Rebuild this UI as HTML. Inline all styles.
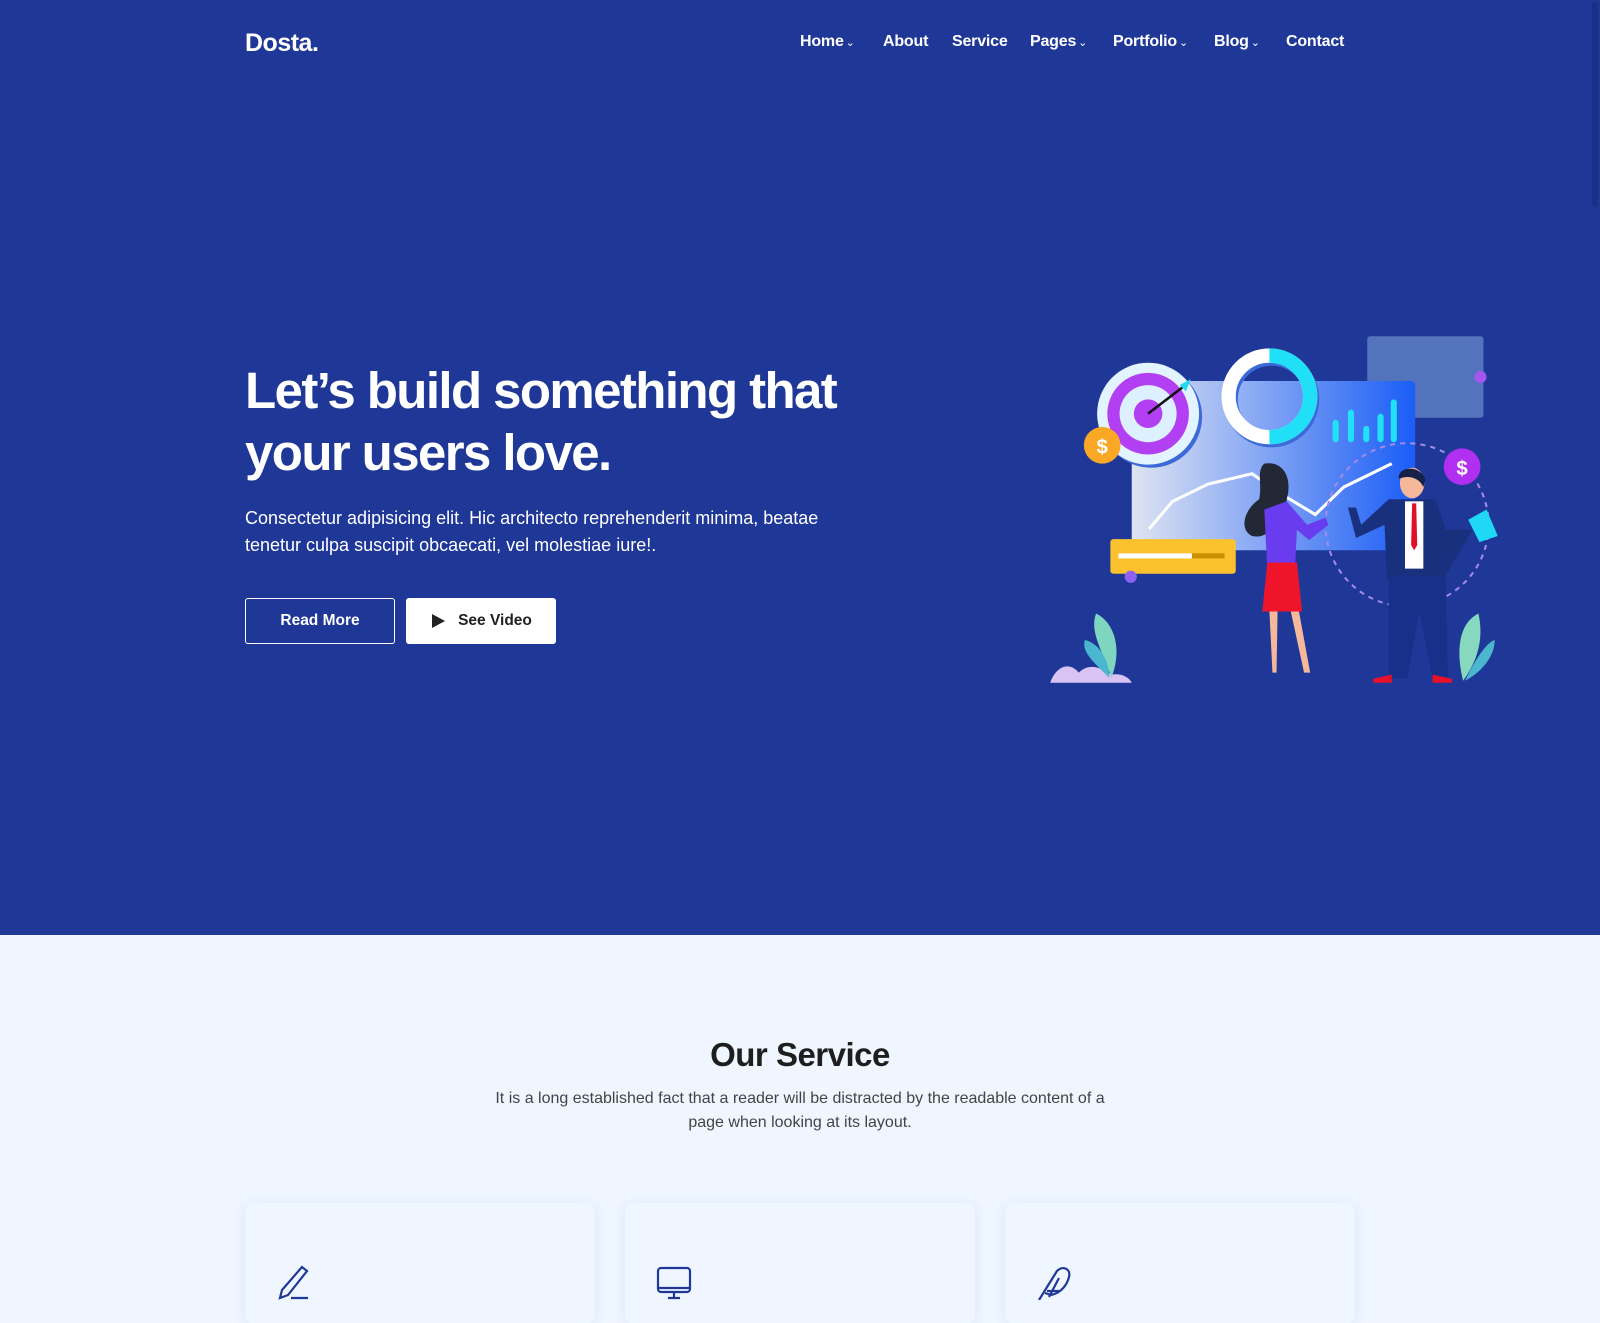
<!DOCTYPE html>
<html><head><meta charset="utf-8"><style>
*{margin:0;padding:0;box-sizing:border-box}
body{width:1600px;height:1300px;overflow:hidden;background:#eff6ff;font-family:"Liberation Sans",sans-serif;position:relative}
.hero{position:absolute;left:0;top:0;width:1600px;height:935px;background:#1f3797}
.logo{position:absolute;left:245px;top:29px;color:#fff;font-size:25px;font-weight:bold;letter-spacing:-0.5px}
.nav{position:absolute;top:33px;color:#fff;font-size:16px;font-weight:bold;letter-spacing:-0.2px}
.nav span.c{font-size:11px;font-weight:normal;margin-left:2px}
h1{position:absolute;left:245px;top:360px;color:#fff;font-size:51px;line-height:62px;font-weight:bold;letter-spacing:-1.6px}
.p{position:absolute;left:245px;top:505px;color:#fff;font-size:18px;line-height:27px;letter-spacing:0}
.btn{position:absolute;top:598px;width:150px;height:46px;border-radius:3px;font-size:15.5px;font-weight:bold;display:flex;align-items:center;justify-content:center}
.b1{left:245px;border:1px solid #fff;color:#fff}
.b2{left:406px;background:#fff;color:#222}
.sb{position:absolute;left:1592px;top:2px;width:6px;height:205px;border-radius:3px;background:#1b3084}
.t{position:absolute;left:0;width:1600px;text-align:center}
.card{position:absolute;top:1203px;width:350px;height:120px;border-radius:8px;background:#eff6ff;box-shadow:0 2px 12px rgba(30,55,150,.09)}
</style></head><body>
<div class="hero"></div>
<div class="sb"></div>
<div class="logo">Dosta.</div>
<div class="nav" style="left:800px">Home<span class="c">&#8964;</span></div>
<div class="nav" style="left:883px">About</div>
<div class="nav" style="left:952px">Service</div>
<div class="nav" style="left:1030px">Pages<span class="c">&#8964;</span></div>
<div class="nav" style="left:1113px">Portfolio<span class="c">&#8964;</span></div>
<div class="nav" style="left:1214px">Blog<span class="c">&#8964;</span></div>
<div class="nav" style="left:1286px">Contact</div>
<h1>Let’s build something that<br>your users love.</h1>
<div class="p">Consectetur adipisicing elit. Hic architecto reprehenderit minima, beatae<br>tenetur culpa suscipit obcaecati, vel molestiae iure!.</div>
<div class="btn b1">Read More</div>
<div class="btn b2"><svg width="16" height="16" viewBox="0 0 16 16" style="margin-right:12px"><path d="M2 1L15 8L2 15Z" fill="#222"/></svg>See Video</div>

<svg style="position:absolute;left:1040px;top:326px" width="469" height="367" viewBox="1020 320 460 360">
<defs><linearGradient id="g" x1="0" x2="1"><stop offset="0" stop-color="#dfe4f2"/><stop offset="1" stop-color="#1a5df6"/></linearGradient></defs>
<rect x="1341" y="330" width="114" height="80" rx="3" fill="#6688c8" opacity=".75"/>
<circle cx="1452" cy="370" r="6" fill="#a356f0"/>
<rect x="1110" y="374" width="278" height="166" rx="4" fill="url(#g)"/>
<polyline points="1127,519 1150,492 1185,475 1228,465 1262,488 1290,505 1318,478 1365,455" fill="none" stroke="#fff" stroke-width="3"/>
<g fill="#22e0f5"><rect x="1307" y="412" width="6" height="22" rx="3"/><rect x="1322" y="402" width="6" height="32" rx="3"/><rect x="1337" y="418" width="6" height="16" rx="3"/><rect x="1351" y="406" width="6" height="28" rx="3"/><rect x="1364" y="392" width="6" height="42" rx="3"/></g>
<circle cx="1129" cy="409" r="50" fill="#3c6ad8"/>
<circle cx="1126" cy="406" r="50" fill="#e2f4ff"/>
<circle cx="1126" cy="406" r="40" fill="#b23ff2"/>
<circle cx="1126" cy="406" r="28" fill="#ddf0ff"/>
<circle cx="1126" cy="406" r="14" fill="#b23ff2"/>
<line x1="1126" y1="406" x2="1160" y2="380" stroke="#111" stroke-width="2.5"/>
<path d="M1157 378L1168 372L1163 384Z" fill="#22d8f5"/>
<circle cx="1081" cy="437" r="18" fill="#f9a825"/><text x="1081" y="445" fill="#fff" font-size="20" font-weight="bold" text-anchor="middle" font-family="Liberation Sans">$</text>
<circle cx="1247" cy="392" r="40" fill="none" stroke="#3c6ad8" stroke-width="14"/>
<circle cx="1245" cy="389" r="40" fill="none" stroke="#fff" stroke-width="14"/>
<path d="M1245 349A40 40 0 0 1 1245 429" fill="none" stroke="#20e0f8" stroke-width="14"/>
<circle cx="1380" cy="515" r="80" fill="none" stroke="#a58ae8" stroke-width="2" stroke-dasharray="5 5"/>
<circle cx="1434" cy="458" r="18" fill="#b02ff0"/><text x="1434" y="466" fill="#fff" font-size="20" font-weight="bold" text-anchor="middle" font-family="Liberation Sans">$</text>
<rect x="1089" y="529" width="123" height="34" rx="3" fill="#fbc22d"/>
<rect x="1097" y="543" width="104" height="5" fill="#c99000"/><rect x="1097" y="543" width="72" height="5" fill="#fff"/>
<circle cx="1109" cy="566" r="6" fill="#8c62f0"/>
<path d="M1240 455C1258 452 1268 468 1262 490C1258 510 1245 530 1228 526C1215 520 1220 500 1235 490C1238 475 1232 462 1240 455Z" fill="#222836"/>
<path d="M1240 500L1262 492L1282 515L1300 508L1303 515L1284 530L1272 520L1270 560L1243 560Z" fill="#6a3cf0"/>
<path d="M1243 552L1272 552L1277 600L1238 600Z" fill="#f0142a"/>
<path d="M1245 600L1253 600L1252 660L1248 660Z M1266 600L1274 600L1285 660L1279 660Z" fill="#f5b89a"/>
<ellipse cx="1385" cy="474" rx="12" ry="15" fill="#f5b89a"/>
<path d="M1372 470C1370 458 1392 455 1398 470L1396 478C1392 468 1380 466 1372 470Z" fill="#17214a"/>
<path d="M1362 490L1408 490L1418 520L1444 520L1416 568L1360 568L1358 515L1330 528L1322 498L1330 498L1335 515Z" fill="#18307e"/>
<rect x="1378" y="492" width="18" height="66" fill="#fff"/><path d="M1385 494L1389 494L1390 535L1387 540L1384 535Z" fill="#e0102a"/>
<path d="M1362 566L1418 566L1420 666L1405 666L1392 600L1380 666L1362 666Z" fill="#17308a"/>
<path d="M1347 666L1365 662L1365 670L1347 670Z M1405 662L1424 666L1424 670L1405 670Z" fill="#e8102a"/>
<path d="M1440 510L1458 500L1469 526L1451 532Z" fill="#1fd8f5"/>
<path d="M1030 670C1035 655 1048 648 1058 660C1068 650 1080 655 1090 662C1100 660 1108 665 1110 670Z" fill="#d9c3f5"/>
<path d="M1090 665C1082 640 1068 620 1075 602C1095 612 1100 640 1090 665Z" fill="#7ed6c0"/>
<path d="M1088 665C1075 652 1060 640 1064 628C1080 632 1088 650 1088 665Z" fill="#4bb7cf"/>
<path d="M1435 668C1428 640 1430 612 1450 602C1456 628 1448 650 1435 668Z" fill="#86d9bf"/>
<path d="M1437 668C1445 650 1458 630 1466 628C1466 645 1452 660 1437 668Z" fill="#4bb7cf"/>
</svg>

<div class="t" style="top:1036px;font-size:33px;font-weight:bold;color:#1e1e1e;letter-spacing:-0.5px">Our Service</div>
<div class="t" style="top:1087px;font-size:16px;line-height:24px;color:#444">It is a long established fact that a reader will be distracted by the readable content of a<br>page when looking at its layout.</div>
<div class="card" style="left:245px"></div>
<div class="card" style="left:625px"></div>
<div class="card" style="left:1005px"></div>
<svg style="position:absolute;left:276px;top:1265px" width="40" height="35" viewBox="0 0 40 35" fill="none" stroke="#1f3797" stroke-width="2.2"><path d="M26 2L31 6L12 30L4 33L6 25Z"/><path d="M15 33L32 33"/></svg>
<svg style="position:absolute;left:655px;top:1265px" width="40" height="35" viewBox="0 0 40 35" fill="none" stroke="#1f3797" stroke-width="2.2"><rect x="3" y="3" width="32" height="24" rx="3"/><path d="M3 23L35 23M19 27L19 33M13 33L25 33"/></svg>
<svg style="position:absolute;left:1035px;top:1265px" width="40" height="35" viewBox="0 0 40 35" fill="none" stroke="#1f3797" stroke-width="2.2"><path d="M4 35L22 6C28 0 36 4 34 12C32 20 26 28 16 30L10 28"/><path d="M12 26L24 26M24 13L14 32"/></svg>
</body></html>
